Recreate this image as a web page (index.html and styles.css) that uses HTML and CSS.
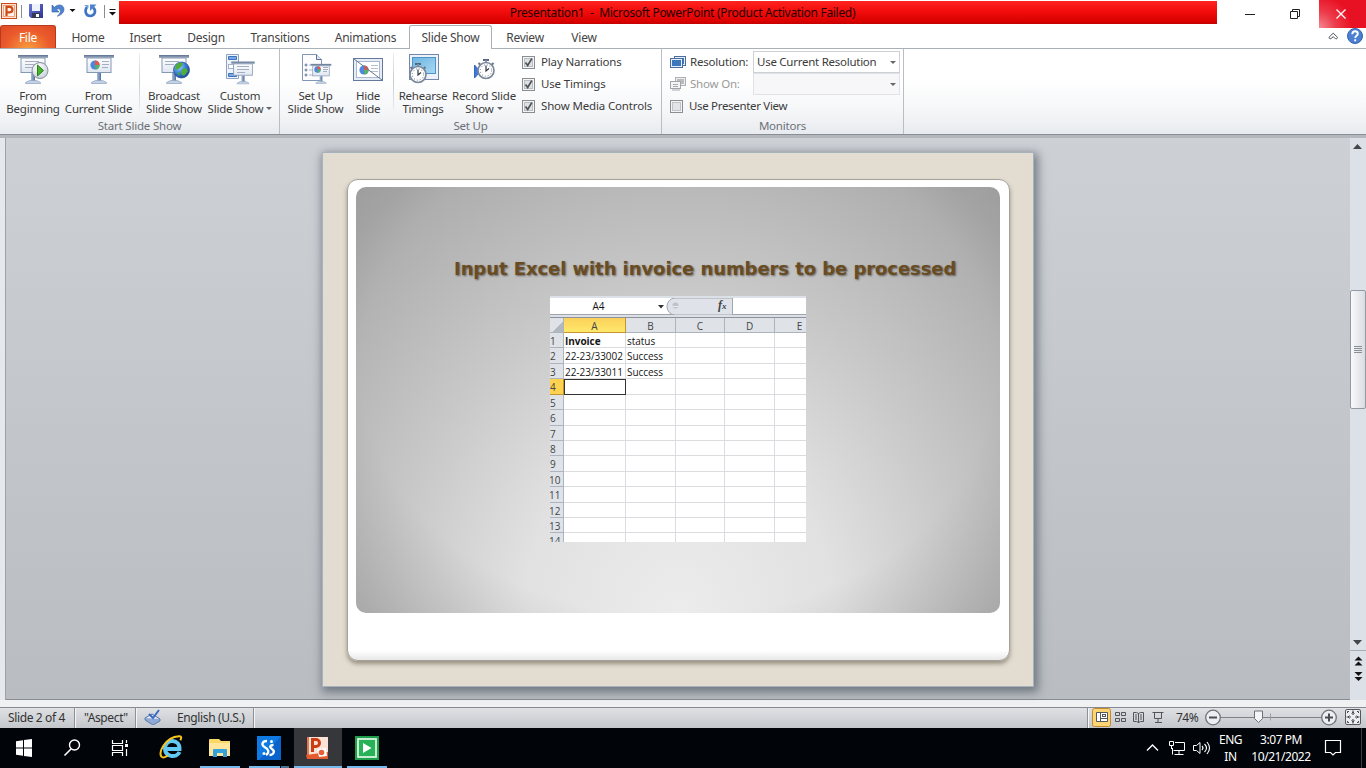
FILE: index.html
```html
<!DOCTYPE html>
<html lang="en">
<head>
<meta charset="utf-8">
<title>Presentation1 - Microsoft PowerPoint</title>
<link rel="stylesheet" href="styles.css">
</head>
<body>
<svg width="0" height="0" class="defs" aria-hidden="true">
  <defs>
    <linearGradient id="board" x1="0" y1="0" x2="0" y2="1"><stop offset="0" stop-color="#fff"/><stop offset="1" stop-color="#dfe6f1"/></linearGradient>
    <linearGradient id="bar" x1="0" y1="0" x2="0" y2="1"><stop offset="0" stop-color="#5d7191"/><stop offset="1" stop-color="#a3b0c4"/></linearGradient>
    <linearGradient id="pole" x1="0" y1="0" x2="1" y2="0"><stop offset="0" stop-color="#a9bcd6"/><stop offset="1" stop-color="#53709b"/></linearGradient>
    <linearGradient id="blue" x1="0" y1="0" x2="1" y2="1"><stop offset="0" stop-color="#6db5e2"/><stop offset="1" stop-color="#a9d8f2"/></linearGradient>
    <radialGradient id="globeFill" cx=".35" cy=".3" r=".8"><stop offset="0" stop-color="#9fd0ff"/><stop offset=".5" stop-color="#3a7fdd"/><stop offset="1" stop-color="#153c92"/></radialGradient>
    <radialGradient id="playFill" cx=".4" cy=".3" r=".8"><stop offset="0" stop-color="#fff"/><stop offset="1" stop-color="#c3ccd8"/></radialGradient>
    <linearGradient id="save" x1="0" y1="0" x2="1" y2="1"><stop offset="0" stop-color="#6f79d8"/><stop offset="1" stop-color="#2a3494"/></linearGradient>
    <symbol id="screen" viewBox="0 0 32 32">
      <rect x="4" y="5" width="24" height="14.5" fill="url(#board)" stroke="#8497b3"/>
      <rect x="1" y="2" width="30" height="3" fill="url(#bar)"/>
      <rect x="14" y="20" width="4" height="8" fill="url(#pole)"/>
      <path d="M8.500 30.500v-1l4-2h7l4 2v1z" fill="#c3d1e5" stroke="#8ba0bf" stroke-width=".7"/>
    </symbol>
    <symbol id="pie" viewBox="0 0 10 10">
      <circle cx="5" cy="5" r="4.600" fill="#4f87dc"/>
      <path d="M5 5V.4A4.600 4.600 0 0 1 9.600 5z" fill="#e8564a"/>
      <path d="M5 5H9.600A4.600 4.600 0 0 1 5.500 9.600z" fill="#55b269"/>
    </symbol>
    <symbol id="watch" viewBox="0 0 20 22">
      <rect x="7" y="1" width="6" height="2" fill="#55657c"/><rect x="9" y="2" width="2" height="3" fill="#8290a5"/>
      <path d="M2.500 5l2 2M17.500 5l-2 2" stroke="#65758c" stroke-width="2"/>
      <circle cx="10" cy="12.500" r="8" fill="#fff" stroke="#7c8899" stroke-width="1.700"/>
      <circle cx="10" cy="12.500" r="5.700" fill="none" stroke="#667489" stroke-width="1" stroke-dasharray="1 2"/>
      <path d="M10 7.500v5.500l3-2.500" fill="none" stroke="#2c3543" stroke-width="1.200"/>
    </symbol>
    <symbol id="tick" viewBox="0 0 13 13">
      <rect x=".5" y=".5" width="12" height="12" fill="#f4f4f4" stroke="#8a8d91"/>
      <rect x="2.500" y="2.500" width="8" height="8" fill="#dfe1e4" stroke="#b9bcc0"/>
      <path d="M3.500 6.500l2.200 3L9.800 2.600" fill="none" stroke="#4c5055" stroke-width="1.700"/>
    </symbol>
    <symbol id="pages" viewBox="0 0 24 32">
      <path d="M1.500 1.500h14l5 5v21h-19z" fill="#fdfdff" stroke="#8195b4"/>
      <path d="M15.500 1.500v5h5" fill="#dbe5f3" stroke="#5b7398"/>
      <g fill="none" stroke="#5b7398"><circle cx="5" cy="12" r="1"/><circle cx="5" cy="17" r="1"/><circle cx="5" cy="22" r="1"/></g>
      <path d="M8 12h5M8 17h5M8 22h5" stroke="#a9b6ca"/>
    </symbol>
  </defs>
</svg>
<div class="app">
  <header class="titlebar">
    <div class="quick">
      <svg width="119" height="24" viewBox="0 0 119 24">
        <rect x="1.500" y="3.500" width="15" height="15" fill="#fbe3d6" stroke="#cf4a1b"/>
        <rect x="3.500" y="5.500" width="11" height="11" fill="#fff3ea" stroke="#f2a27d"/>
        <path d="M6.500 16V6.800h3.200a2.700 2.700 0 0 1 0 5.500H6.500" fill="none" stroke="#d04a14" stroke-width="2.200"/>
        <path d="M21.500 5v13M104.500 5v13" stroke="#8c8c8c"/>
        <path d="M29 4h14v14H31l-2-2z" fill="url(#save)"/><rect x="32" y="4" width="8" height="7" fill="#eef2fb"/><rect x="32" y="13" width="8" height="5" fill="#343c55"/><rect x="36" y="14" width="3" height="3" fill="#fff"/>
        <path d="M52 5v7h7l-2.500-2.200c2.500-2.300 4.500 0 3.700 2.700-.5 1.500-1.500 2.400-3 3.700 4.300-1.200 6.800-4 6.800-7 0-4.200-5.500-6-9.400-2z" fill="#4e83cd" stroke="#2f5ea9" stroke-width=".6"/>
        <path d="M69.500 9h6l-3 3z" fill="#111"/>
        <path d="M87 7c-3 4-1 9 3.200 9s6.800-5 2.800-8.500" fill="none" stroke="#3f76c4" stroke-width="2.600"/><path d="M96.500 4.500h-6.500v6.500z" fill="#4e83cd"/>
        <path d="M84 5h4.500v3z" fill="#6ba0df"/>
        <path d="M109.500 9.500h6" stroke="#111"/><path d="M109 12h7l-3.500 3.500z" fill="#111"/>
      </svg>
    </div>
    <div class="caption"><span>Presentation1&nbsp; -&nbsp; Microsoft PowerPoint (Product Activation Failed)</span></div>
    <div class="winbtns">
      <svg class="winbtn" viewBox="0 0 45 28"><path d="M11 14.500h10" stroke="#222"/></svg>
      <svg class="winbtn" viewBox="0 0 45 28"><path d="M12.500 11.500h7v7h-7zM14.500 11v-1.500h7v7h-1.500" fill="none" stroke="#222"/></svg>
      <svg class="winbtn close" viewBox="0 0 47 28"><path d="M17.500 9.500l9 9M26.500 9.500l-9 9" stroke="#fff" stroke-width="1.300"/></svg>
    </div>
  </header>
  <nav class="tabs">
    <span class="tab file">File</span><span class="tab home">Home</span><span class="tab insert">Insert</span><span class="tab design">Design</span><span class="tab trans">Transitions</span><span class="tab anim">Animations</span><span class="tab active">Slide Show</span><span class="tab review">Review</span><span class="tab view">View</span>
    <svg class="help" width="40" height="23" viewBox="0 0 40 23">
      <path d="M3.500 13.500c-1-1 0-2 .7-2.500l3-2.800 3 2.800c.8.500 1.800 1.500.8 2.500-1 .8-1.700 0-3.800-1.800-2 1.800-2.800 2.600-3.700 1.800z" fill="#fff" stroke="#4a4f57"/>
      <circle cx="29" cy="11" r="7.500" fill="#4a7fd2" stroke="#3563b0"/>
      <path d="M26.300 9.200c0-4 5.500-3.600 5.500-.4 0 2-2.600 2-2.600 4.200M29.200 14.200v2" fill="none" stroke="#fff" stroke-width="1.900"/>
    </svg>
  </nav>
  <section class="ribbon">
    <div class="group g1">
      <div class="tools">
        <div class="btn w66"><svg width="32" height="32"><use href="#screen"/><path d="M8 8.500h14M8 11.500h10M8 14.500h8" stroke="#a3aec0"/><circle cx="23" cy="17.500" r="8" fill="url(#playFill)" stroke="#838d9b"/><path d="M20.500 12v11l6-5.500z" fill="#4ab32c" stroke="#27801b"/></svg><span>From</span><span>Beginning</span></div>
        <div class="btn w65"><svg width="32" height="32"><use href="#screen"/><use href="#pie" x="7" y="7" width="10" height="10"/><path d="M19 8.500h7M19 11.500h7M19 14.500h6" stroke="#a3aec0"/></svg><span>From</span><span>Current Slide</span></div>
        <i class="sep s1"></i>
        <div class="btn w66"><svg width="32" height="32"><use href="#screen"/><path d="M7 8.500h14M7 11.500h9" stroke="#a3aec0"/><circle cx="23.500" cy="17" r="8" fill="url(#globeFill)" stroke="#2c4a86" stroke-width=".7"/><path d="M18 12c3-3 6-2.500 7-1l-2 3-4 3-2-1zM24 16l4-1 2 3-4 5-3-2zM19 19l3 1-1 3z" fill="#4fae36"/></svg><span>Broadcast</span><span>Slide Show</span></div>
        <div class="btn w66"><svg width="32" height="32"><path d="M2.500 1.500h12v24h-12z" fill="#eef3fa" stroke="#8ea2c1"/><path d="M4.500 3.500h8v3h-8zM4.500 20.500h8v3h-8z" fill="#78a9e5" stroke="#3f73bd"/><rect x="4.500" y="11.500" width="5" height="4" fill="#fff" stroke="#a5b3c9"/><use href="#screen" x="6" y="7" width="26" height="25"/><path d="M13 13.500h12M13 16.500h12M13 19.500h8" stroke="#a3aec0"/></svg><span>Custom</span><span class="drop">Slide Show<b></b></span></div>
      </div>
      <div class="glabel">Start Slide Show</div>
    </div>
    <div class="group g2">
      <div class="tools">
        <div class="btn w65"><svg width="32" height="32"><use href="#pages" x="1" y="0" width="24" height="32"/><use href="#screen" x="10" y="9" width="22" height="23"/><use href="#pie" x="14" y="13" width="7" height="7"/><path d="M23 14.500h5M23 16.500h5M23 18.500h4" stroke="#a3aec0"/></svg><span>Set Up</span><span>Slide Show</span></div>
        <div class="btn w40"><svg width="32" height="32"><rect x="1.500" y="5.500" width="29" height="22" fill="#e6edf7" stroke="#64799b"/><rect x="4.500" y="8.500" width="23" height="16" fill="#fff" stroke="#a9b8cf"/><use href="#pie" x="7" y="12" width="10" height="10"/><path d="M19 12.500h7M19 15.500h7M19 18.500h7" stroke="#b4bfd0"/><path d="M2 6l28 21" stroke="#64758f"/></svg><span>Hide</span><span>Slide</span></div>
        <i class="sep s2"></i>
        <div class="btn w54"><svg width="32" height="32"><rect x="2.500" y="1.500" width="29" height="25" fill="#edf2fa" stroke="#7289ad"/><rect x="5.500" y="4.500" width="23" height="16" fill="url(#blue)" stroke="#4c95c8"/><use href="#watch" x="1" y="9" width="20" height="22"/></svg><span>Rehearse</span><span>Timings</span></div>
        <div class="btn w68"><svg width="32" height="32"><path d="M6.500 12v13l6-6.500z" fill="#3d78df" stroke="#3768bf"/><use href="#watch" x="8" y="5" width="20" height="22"/></svg><span>Record Slide</span><span class="drop">Show<b></b></span></div>
        <div class="checks">
          <label><svg width="13" height="13"><use href="#tick"/></svg><span>Play Narrations</span></label>
          <label><svg width="13" height="13"><use href="#tick"/></svg><span>Use Timings</span></label>
          <label><svg width="13" height="13"><use href="#tick"/></svg><span>Show Media Controls</span></label>
        </div>
      </div>
      <div class="glabel">Set Up</div>
    </div>
    <div class="group g3">
      <div class="tools monitors">
        <div class="mrow"><svg width="16" height="14"><rect x="4.500" y="1.500" width="11" height="9" fill="#e8effa" stroke="#4a6c9e"/><rect x="6" y="3" width="8" height="6" fill="#3c78bd"/><rect x=".5" y="3.500" width="12" height="9" fill="#e8effa" stroke="#4a6c9e"/><rect x="2" y="5" width="9" height="6" fill="#3c78bd"/></svg><span class="mlabel">Resolution:</span><div class="combo"><span>Use Current Resolution</span><b></b></div></div>
        <div class="mrow"><svg width="16" height="14"><rect x="5.500" y=".5" width="10" height="8" fill="#eee" stroke="#adb0b5"/><rect x="7" y="2" width="7" height="5" fill="#bbb"/><rect x=".5" y="4.500" width="10" height="7" fill="#f4f4f4" stroke="#a1a4a9"/><path d="M3 7.500h5M3 9.500h5M2 13h8" stroke="#a7aab0"/></svg><span class="mlabel dim">Show On:</span><div class="combo off"><b></b></div></div>
        <div class="mrow"><svg width="13" height="13"><rect x=".5" y=".5" width="12" height="12" fill="#f4f4f4" stroke="#8a8d91"/><rect x="2.500" y="2.500" width="8" height="8" fill="#e3e4e7" stroke="#bfc2c6"/></svg><span class="pv">Use Presenter View</span></div>
      </div>
      <div class="glabel">Monitors</div>
    </div>
  </section>
  <main class="work">
    <div class="canvas">
      <div class="slide">
        <div class="frame">
          <div class="panel">
            <h1>Input Excel with invoice numbers to be processed</h1>
            <div class="sheet">
              <div class="fbar"><span class="cellname">A4</span><svg width="76" height="17" viewBox="0 0 76 17"><path d="M1 7h6L4 10.500z" fill="#333"/><path d="M75.500 0H18a8 8.500 0 0 0 0 17h57.500z" fill="#dfe2e8" stroke="#a2a6ac"/><circle cx="18.500" cy="7.500" r="3" fill="#bfc3c9"/><path d="M15.500 8.500h6" stroke="#e8eaee"/></svg><em>f<small>x</small></em></div>
              <div class="cells">
                <i class="h corner"></i><i class="h sel">A</i><i class="h">B</i><i class="h">C</i><i class="h">D</i><i class="h last">E</i>
                <i class="n">1</i><i class="bold">Invoice</i><i>status</i><i></i><i></i><i></i>
                <i class="n">2</i><i>22-23/33002</i><i>Success</i><i></i><i></i><i></i>
                <i class="n">3</i><i>22-23/33011</i><i>Success</i><i></i><i></i><i></i>
                <i class="n on">4</i><i class="cur"></i><i></i><i></i><i></i><i></i>
                <i class="n">5</i><i></i><i></i><i></i><i></i><i></i>
                <i class="n">6</i><i></i><i></i><i></i><i></i><i></i>
                <i class="n">7</i><i></i><i></i><i></i><i></i><i></i>
                <i class="n">8</i><i></i><i></i><i></i><i></i><i></i>
                <i class="n">9</i><i></i><i></i><i></i><i></i><i></i>
                <i class="n two">10</i><i></i><i></i><i></i><i></i><i></i>
                <i class="n two">11</i><i></i><i></i><i></i><i></i><i></i>
                <i class="n two">12</i><i></i><i></i><i></i><i></i><i></i>
                <i class="n two">13</i><i></i><i></i><i></i><i></i><i></i>
                <i class="n two">14</i><i></i><i></i><i></i><i></i><i></i>
              </div>
            </div>
          </div>
        </div>
      </div>
    </div>
    <div class="scroll">
      <svg width="16" height="152" viewBox="0 0 16 152"><path d="M3 11h9L7.500 6z" fill="#45474b"/></svg>
      <div class="thumb"><svg width="8" height="8"><path d="M0 .5h8M0 2.500h8M0 4.500h8M0 6.500h8" stroke="#8b8f95"/></svg></div>
      <svg class="bot" width="16" height="66" viewBox="0 0 16 66"><path d="M3 6h9L7.500 11z" fill="#45474b"/><path d="M0 16.500h16" stroke="#a9adb4"/><path d="M4.500 26.500h8l-4-4zM4.500 31.500h8l-4-4zM4.500 38h8l-4 4zM4.500 43h8l-4 4z" fill="#111"/></svg>
    </div>
  </main>
  <footer class="status">
    <span class="st slideno">Slide 2 of 4</span><span class="st aspect">"Aspect"</span>
    <span class="st spell"><svg width="18" height="16"><path d="M1 9l7-4 8 5-7 5z" fill="#e8effa" stroke="#4b6da7"/><path d="M1 9v2l8 5 7-4v-2" fill="#8da9d4" stroke="#4b6da7" stroke-width=".8"/><path d="M5 5l4 4 6-8" fill="none" stroke="#3c69c2" stroke-width="2"/></svg></span>
    <span class="st lang">English (U.S.)</span>
    <svg class="views" width="89" height="20" viewBox="0 0 89 20"><path d="M.5 0v20" stroke="#8d9197"/><path d="M1.500 0v20" stroke="#f8f8f8"/><rect x="5.500" y=".5" width="18" height="18" rx="2" fill="#fcd675" stroke="#c28a30"/><path d="M9.500 4.500h11v9h-11z" fill="#fff" stroke="#53555a"/><path d="M13.500 4v10M14 10.500h6" stroke="#53555a"/><rect x="15.500" y="6.500" width="3" height="2" fill="none" stroke="#53555a"/><path d="M28.500 4.500h4v3h-4zM34.500 4.500h4v3h-4zM28.500 10.500h4v3h-4zM34.500 10.500h4v3h-4zM46.500 4.500h3l2 1 2-1h3v9h-3l-2 1-2-1h-3zM51.500 5v10M48 7h2M48 9h2M48 11h2M53 7h2M53 9h2M53 11h2M65.500 4.500h11M67.500 5v5.500h7v-5.500M71 11v3M68 14.500h7" fill="none" stroke="#53555a"/></svg>
    <span class="pct">74%</span>
    <svg class="zoomer" width="162" height="20" viewBox="0 0 162 20"><path d="M15 9.500h102" stroke="#7e8287"/><path d="M66.500 5.500v7" stroke="#9a9ea3"/><g fill="#eceef1" stroke="#6f7378" stroke-width="1.300"><circle cx="9" cy="9.500" r="7.300"/><circle cx="125" cy="9.500" r="7.300"/></g><path d="M5 9.500h8M121 9.500h8M125 5.500v8" stroke="#494c51" stroke-width="2"/><path d="M50.500 3h8v7.500l-4 4-4-4z" fill="#f4f5f7" stroke="#6d7176"/><rect x="141.500" y="1.500" width="15" height="15" rx="1.500" fill="#eceef1" stroke="#54575c"/><path d="M149 2.500v4.500M149 11v4.500M142.500 9h4.500M151 9h4.500" stroke="#45484c" stroke-width="1.200"/><path d="M147.500 5.500l1.500-1.500 1.500 1.500M147.500 12.500l1.500 1.500 1.500-1.500M145.500 7.500l-1.500 1.500 1.500 1.500M152.500 7.500l1.500 1.500-1.500 1.500M143.500 5V3.500h1.500M153 3.500h1.500V5M143.500 13v1.500h1.500M153 14.500h1.500V13" fill="none" stroke="#45484c"/></svg>
  </footer>
  <footer class="taskbar">
    <svg width="400" height="40" viewBox="0 0 400 40">
      <path d="M16 13.200l7-1v7.300h-7zM24 12l8-1.100v8.600h-8zM16 20.500h7v7.300l-7-1zM24 20.500h8v8.600l-8-1.100z" fill="#fff"/>
      <circle cx="74.500" cy="17" r="5" fill="none" stroke="#fff" stroke-width="1.400"/><path d="M71 21l-6.500 6.500" stroke="#fff" stroke-width="1.600"/>
      <path d="M112.500 12v3.500h10V12M112.500 28v-3.500h10V28M112.500 17.500h10v5h-10zM126.500 12v3M126.500 21v7" fill="none" stroke="#fff" stroke-width="1.200"/><rect x="125" y="16" width="3" height="3" fill="#fff"/>
      <path d="M179.500 24c-3 6.500-14.500 5-14.500-3.500 0-10.500 15-9.500 14.500.5h-13" fill="none" stroke="#62c8f4" stroke-width="4"/>
      <path d="M162 29c-5-3 3-20 17-20.800 3-.2 2.500 2 1.300 4M162 29c1.500 1 4-.1 6-1.500" fill="none" stroke="#f8c51c" stroke-width="2"/>
      <path d="M209 12q0-1 1-1h9l2 2h9v14h-21z" fill="#fbd768"/><path d="M209 15h21v13h-21z" fill="#ffe69a"/><path d="M213 29v-7q0-1 1-1h12q1 0 1 1v7h-4v-4h-6v4z" fill="#34a3dc"/>
      <rect x="257" y="8" width="24" height="24" fill="#0d7be3"/><path d="M281 8v24H259z" fill="#0a62cb"/><path d="M267 13c-5 0-6 4-2.500 6 4 2.200 5.500 5 1.500 8M273.500 17c-3.500 0-4.500 2-1.500 4 3.500 2.300 1.500 6-2.500 6" fill="none" stroke="#fff" stroke-width="2.300"/><circle cx="271.500" cy="13.500" r="1.500" fill="#fff"/><circle cx="264" cy="25.500" r="1.500" fill="#fff"/>
      <rect x="294" y="0" width="48" height="40" fill="#36373b"/>
      <path d="M307 9h20v22h-20z" fill="#e8764e"/><path d="M309 9h19v21h-19z" fill="#fae3d6"/><path d="M306 27l22-3v7h-21z" fill="#e45b2e"/><path d="M312.500 24V11.500h3.500a3.500 3.500 0 0 1 0 7h-3.500" fill="none" stroke="#cb3e13" stroke-width="3"/><path d="M317 21l9-1 1 8-8 1z" fill="#fff"/><circle cx="321.500" cy="24.500" r="2.800" fill="#e55e35"/>
      <rect x="355" y="8" width="24" height="24" fill="#1f9f4b"/><rect x="358" y="11" width="18" height="18" fill="#28b258" stroke="#d9f4e2" stroke-width="1.800"/><path d="M363 15v10l8.500-5z" fill="#fff"/>
      <path d="M200 39h40M249 39h31M294 39h48M347 39h40" stroke="#76b9ed" stroke-width="2"/><path d="M281 39h8" stroke="#4a7395" stroke-width="2"/>
    </svg>
    <div class="tray">
      <svg width="72" height="40" viewBox="0 0 72 40"><path d="M3 22.500l5.500-5.500 5.500 5.500" fill="none" stroke="#fff" stroke-width="1.400"/><path d="M31 14.500h9.500v8h-11M28.500 20v6.500M35 22.500v4M30.500 26.500h9" fill="none" stroke="#fff"/><path d="M25.500 13.500h4v4h-4zM27.500 18v3" fill="none" stroke="#fff"/><path d="M49.500 17.500h3l3.500-3v11l-3.500-3h-3z" fill="none" stroke="#fff"/><path d="M58 18q2 2 0 4M60.500 16q4 4 0 8M63 14q5 6 0 12" fill="none" stroke="#fff" stroke-width="1.100"/></svg>
      <div class="tcol eng"><span>ENG</span><span>IN</span></div>
      <div class="tcol time"><span>3:07 PM</span><span>10/21/2022</span></div>
      <svg width="49" height="40" viewBox="0 0 49 40"><path d="M8.500 12.500h15v12h-5l-2.500 2.500-2.500-2.500h-5z" fill="none" stroke="#fff" stroke-width="1.200"/><path d="M44.500 0v40" stroke="#3b3d40"/></svg>
    </div>
  </footer>
</div>
</body>
</html>
```
FILE: styles.css
```css
* { box-sizing: border-box; }
body { margin: 0; font: 12px/14px "Noto Sans", "Open Sans", sans-serif; color: #3b3b3b; background: #fff; overflow: hidden; }
svg { display: block; flex: none; }
.defs { position: absolute; }
.app { width: 1366px; height: 768px; display: flex; flex-direction: column; }
.app > * { flex: none; }

.titlebar { height: 25px; display: flex; z-index: 1; }
.quick { width: 119px; }
.caption { width: 1098px; height: 23px; margin-top: 1px; padding-left: 29px; background: linear-gradient(#fd2420, #f20d0c 45%, #d90000 90%, #c20000); text-align: center; line-height: 24px; color: #240000; letter-spacing: -.31px; white-space: nowrap; }
.winbtns { display: flex; padding-left: 17px; width: 149px; }
.winbtn { width: 45px; height: 28px; }
.winbtn + .winbtn { margin-left: -1px; }
.winbtn.close { width: 47px; background: radial-gradient(circle at 0 100%, #f58a93, #ed3c4b 30%, #e81123 60%); }
.winbtn + .winbtn.close { margin-left: -4px; }

.tabs { height: 24px; display: flex; border-bottom: 1px solid #a9b0b7; }
.tab { height: 23px; text-align: center; line-height: 25px; color: #444; white-space: nowrap; letter-spacing: -.25px; }
.file { width: 56px; margin-right: 3px; border-radius: 3px 3px 0 0; border: 1px solid #b83a1c; border-bottom: 0; background: radial-gradient(ellipse at 50% 110%, #f9a13e, #ea5a2c 60%, #df4a25); color: #fff; line-height: 23px; }
.home { width: 58px; } .insert { width: 57px; } .design { width: 64px; } .trans { width: 84px; } .anim { width: 87px; }
.active { width: 83px; height: 24px; border: 1px solid #a9b0b7; border-bottom: 0; border-radius: 3px 3px 0 0; background: #fff; line-height: 23px; margin-right: 1px; }
.review { width: 64px; } .view { width: 54px; }
.help { margin-left: auto; }

.ribbon { height: 86px; display: flex; background: linear-gradient(#fff 35%, #f6f7f9 70%, #e8ebef); border-bottom: 1px solid #898e95; font-size: 11.500px; letter-spacing: -.2px; }
.group { display: flex; flex-direction: column; border-right: 1px solid #b9bec5; }
.g1 { width: 280px; } .g2 { width: 382px; } .g3 { width: 242px; }
.tools { height: 70px; display: flex; padding-top: 4px; }
.g2 .tools { padding-left: 3px; }
.btn { display: flex; flex-direction: column; align-items: center; white-space: nowrap; line-height: 13px; letter-spacing: -.22px; }
.btn svg { margin-bottom: 4px; }
.w66 { width: 66px; } .w65 { width: 65px; } .w40 { width: 40px; } .w54 { width: 54px; } .w68 { width: 68px; }
.sep { width: 1px; height: 58px; background: linear-gradient(#eee, #c6cad0, #eee); }
.s1 { margin: 0 1px 0 8px; } .s2 { margin: 0 2px 0 5px; }
.drop { display: flex; align-items: center; gap: 3px; }
.drop b, .combo b { border: 3px solid transparent; border-top-color: #666; border-bottom: 0; }
.glabel { height: 16px; text-align: center; line-height: 15px; color: #6c7078; }
.checks { display: flex; flex-direction: column; gap: 8px; padding: 2px 0 0 4px; white-space: nowrap; letter-spacing: -.15px; }
.checks label { height: 14px; display: flex; align-items: center; gap: 6px; }
.tools.monitors { flex-direction: column; padding: 2px 0 0 8px; }
.mrow { height: 22px; display: flex; align-items: center; white-space: nowrap; }
.mlabel { width: 67px; padding-left: 4px; }
.dim { color: #9a9a9a; }
.combo { width: 147px; height: 22px; display: flex; align-items: center; justify-content: space-between; border: 1px solid #cdd1d6; background: #fff; padding: 0 3px 0 3px; letter-spacing: -.26px; }
.combo.off { justify-content: flex-end; background: #f7f7f9; border-color: #e0e2e6; }
.pv { padding-left: 6px; letter-spacing: -.32px; }

.work { height: 572px; display: flex; border-top: 3px solid #b4b8bd; border-bottom: 7px solid #f0f1f3; box-shadow: inset 0 -1px #888c94; background: linear-gradient(#cdd1d6, #b9bdc2); }
.canvas { width: 1350px; padding: 14px 0 0 317px; border-left: 5px solid #e6e8eb; box-shadow: inset 1px 0 #9da1a8; }
.slide { width: 712px; height: 535px; padding: 26px 24px; background: #e3ddd1; border: 1px solid #a6b2bd; box-shadow: 2px 3px 9px 2px rgba(70,80,90,.65); }
.frame { width: 663px; height: 482px; padding: 7px 8px; border: 1px solid #a5a29c; border-radius: 11px; background: linear-gradient(#fff 98%, #e8e8e8); box-shadow: 0 3px 4px rgba(80,70,55,.5); }
.panel { width: 644px; height: 426px; border-radius: 10px; padding: 71px 0 0; background: radial-gradient(ellipse 60% 72% at 50% 42%, rgba(90,90,90,0) 82%, rgba(90,90,90,.26) 118%), radial-gradient(ellipse 460px 530px at 50% 100%, #ececec, #e1e1e1 34%, #c8c8c8 62%, #a9a9a9 100%); }
h1 { margin: 0 0 0 98px; font: bold 18px/22px "DejaVu Sans", sans-serif; color: #694c22; text-shadow: 1px 1px 2px rgba(50,50,50,.65); letter-spacing: -.07px; white-space: nowrap; }

.sheet { width: 256px; height: 246px; margin: 16px 0 0 194px; overflow: hidden; background: #dce0e7; font: 10px/15px "Open Sans", "Noto Sans", sans-serif; color: #151515; }
.fbar { height: 17px; margin: 2px 0; display: flex; background: #fff; border-bottom: 1px solid #a2a6ac; }
.cellname { width: 107px; text-align: center; padding-right: 10px; line-height: 17px; }
.fbar em { width: 0; margin-left: -15px; font: italic bold 12px/14px "Liberation Serif", serif; color: #444; }
.fbar small { font-size: 9px; }
.cells { display: grid; grid-template-columns: 14px 62px 50px 49px 50px 50px; grid-template-rows: 15px; grid-auto-rows: 15.430px; border-top: 1px solid #8e929a; }
.cells i { font-style: normal; background: #fff; border-right: 1px solid #dadcdf; border-bottom: 1px solid #dadcdf; padding-left: 1px; line-height: 16px; white-space: nowrap; letter-spacing: -.04px; }
.cells .h { background: #dfe3e8; border-color: #aeb4bd; text-align: center; padding: 0; color: #444; }
.cells .sel { background: linear-gradient(#fbd15a, #ffe86b); border-color: #c4952e; }
.cells .corner { background: linear-gradient(135deg, #dfe3e8 60%, #b3b8c0 60%); }
.cells .n { background: #dfe3e8; border-color: #aeb4bd; padding: 0; color: #444; }
.cells .two { text-indent: -1px; }
.cells .on { background: #ffd24f; border-color: #c4952e; }
.cells .bold { font-weight: bold; }
.cells .cur { border: 1.500px solid #333; }

.scroll { width: 16px; background: #dce0e7; display: flex; flex-direction: column; }
.thumb { height: 119px; border: 1px solid #949aa3; border-radius: 2px; background: linear-gradient(90deg, #f8f9fa, #d9dce1); display: flex; align-items: center; justify-content: center; }
.bot { margin-top: auto; }

.status { height: 21px; display: flex; align-items: center; background: linear-gradient(#dfe1e4, #c3c6cb); border-top: 1px solid #858a92; color: #333; }
.st { height: 20px; line-height: 19px; border-right: 1px solid #8d9197; box-shadow: 1px 0 #f5f5f5; white-space: nowrap; letter-spacing: -.37px; }
.slideno { width: 75px; padding-left: 8px; } .aspect { width: 61px; padding-left: 9px; }
.spell { width: 26px; padding: 1px 0 0 8px; border: 0; box-shadow: none; }
.lang { width: 92px; padding-left: 15px; }
.views { margin-left: auto; }
.pct { width: 32px; padding-left: 4px; margin-left: -4px; letter-spacing: -.5px; line-height: 19px; height: 20px; }

.taskbar { height: 40px; display: flex; justify-content: space-between; background: #010409; color: #fff; }
.tray { display: flex; }
.tcol { display: flex; flex-direction: column; align-items: center; white-space: nowrap; line-height: 17px; padding-top: 3px; letter-spacing: -.45px; }
.eng { width: 29px; } .time { width: 72px; }
```
